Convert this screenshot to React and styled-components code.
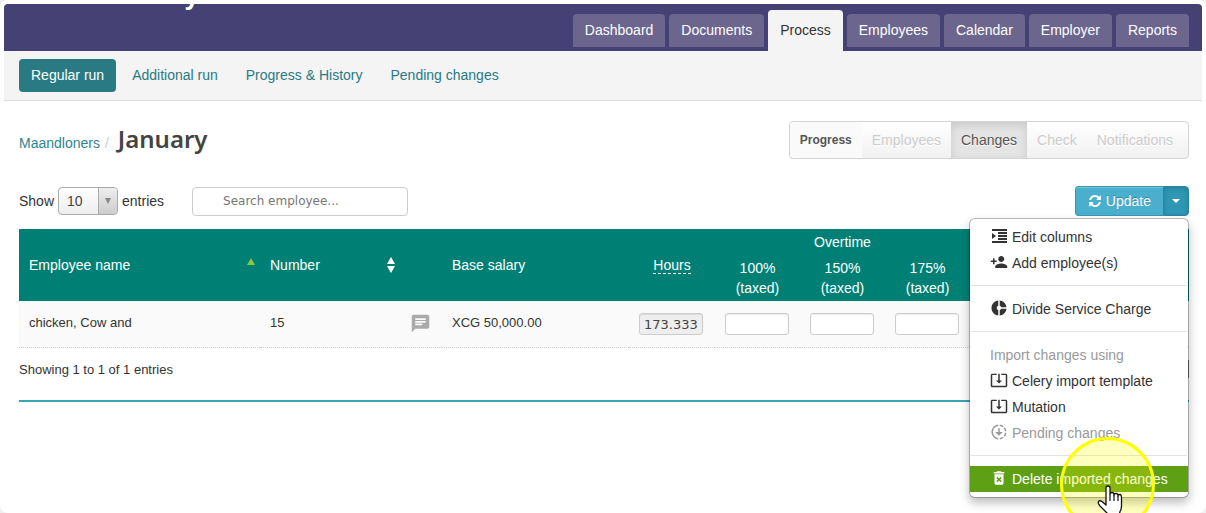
import React, { useState } from "react";
import styled, { createGlobalStyle } from "styled-components";
import {
  MdChat,
  MdDeleteForever,
  MdDonutSmall,
  MdDownloading,
  MdPersonAdd,
  MdSystemUpdateAlt,
} from "react-icons/md";

const GlobalStyle = createGlobalStyle`
  * {
    box-sizing: border-box;
  }
  body {
    margin: 0;
    background-color: #f0f0f0;
    color: #333;
    font-family: "Liberation Sans", Arial, sans-serif;
    font-size: 14px;
    line-height: 20px;
  }
  a {
    text-decoration: none;
  }
`;

const Page = styled.div`
  min-height: 100vh;
  padding: 4px 4px 0;
  overflow: hidden;
  position: relative;
  background-color: #fff;
  border-radius: 8px;
`;

const Header = styled.header`
  display: flex;
  justify-content: space-between;
  align-items: flex-end;
  height: 47px;
  padding: 0 13px 0 181px;
  overflow: hidden;
  background-color: #464174;
  border-radius: 4px 4px 0 0;
`;
const Brand = styled.div`
  align-self: flex-start;
  margin-top: -9px;
  color: #fff;
  font-family: "Noto Sans", sans-serif;
  font-size: 24px;
  font-weight: 700;
  line-height: 0;
`;
const Tabs = styled.nav`
  display: flex;
  align-items: flex-end;
  gap: 4px;
`;
const Tab = styled.a`
  height: ${(props) => (props.$active ? "41px" : "33px")};
  margin-bottom: ${(props) => (props.$active ? "0" : "4px")};
  padding: ${(props) => (props.$active ? "10px 12px" : "6px 12px")};
  border-radius: 4px 4px 0 0;
  background-color: ${(props) => (props.$active ? "#f4f4f4" : "#6c668f")};
  color: ${(props) => (props.$active ? "#333" : "#fff")};
`;

const SubNav = styled.nav`
  display: flex;
  gap: 4px;
  padding: 8px 15px;
  background-color: #f4f4f4;
  border-bottom: 1px solid #ddd;
`;
const SubLink = styled.a`
  padding: 6px 12px 7px;
  border-radius: 4px;
  background-color: ${(props) => (props.$active ? "#297a83" : "transparent")};
  color: ${(props) => (props.$active ? "#fff" : "#297a83")};
`;

const Content = styled.main`
  padding: 20px 13px 0 15px;
`;
const TitleRow = styled.div`
  display: flex;
  justify-content: space-between;
  align-items: flex-start;
`;
const Breadcrumb = styled.div`
  display: flex;
  align-items: baseline;
  gap: 5px;
  a {
    color: #2f8490;
  }
  span {
    color: #ccc;
  }
`;
const Title = styled.h1`
  margin: 0 0 0 4px;
  color: #444;
  font-family: "Trebuchet MS", "Noto Sans", sans-serif;
  font-size: 24px;
  font-weight: 600;
  line-height: 36px;
`;
const Steps = styled.div`
  display: flex;
  height: 38px;
  padding-right: 5px;
  border: 1px solid #d4d4d4;
  border-radius: 4px;
  background-image: linear-gradient(#fff, #f1f1f1);
`;
const StepsLabel = styled.strong`
  padding: 8px 10px;
  background-color: #fafafa;
  border-radius: 4px 0 0 4px;
  color: #555;
  font-size: 12px;
`;
const Step = styled.span`
  padding: 8px 10px;
  background-color: ${(props) => (props.$active ? "#e4e4e4" : "transparent")};
  box-shadow: ${(props) =>
    props.$active ? "inset 0 3px 8px rgba(0, 0, 0, 0.12)" : "none"};
  color: ${(props) => (props.$active ? "#555" : "#ccc")};
  text-shadow: 0 1px 0 #fff;
`;

const Toolbar = styled.div`
  display: flex;
  justify-content: space-between;
  align-items: center;
  margin: 27px 0 13px;
`;
const Filters = styled.div`
  display: flex;
  align-items: center;
  gap: 28px;
`;
const LengthLabel = styled.label`
  display: flex;
  align-items: center;
  gap: 4px;
`;
const SelectBox = styled.span`
  position: relative;
  display: flex;
`;
const Select = styled.select`
  appearance: none;
  width: 60px;
  height: 28px;
  padding: 0 24px 0 8px;
  border: 1px solid #aaa;
  border-radius: 4px;
  background: linear-gradient(#fff, #eee);
  color: #444;
  font: 14px "Liberation Sans", Arial, sans-serif;
`;
const SelectArrow = styled.span`
  position: absolute;
  top: 1px;
  right: 1px;
  bottom: 1px;
  width: 19px;
  display: flex;
  align-items: center;
  justify-content: center;
  border-left: 1px solid #aaa;
  border-radius: 0 3px 3px 0;
  background: linear-gradient(#eee, #ccc);
  pointer-events: none;
`;
const Search = styled.input`
  width: 216px;
  height: 29px;
  padding: 0 30px;
  border: 1px solid #ccc;
  border-radius: 4px;
  outline: none;
  font: 12px "DejaVu Sans", Verdana, sans-serif;
  &::placeholder {
    color: #777;
    opacity: 1;
  }
`;

const ButtonGroup = styled.div`
  position: relative;
  display: flex;
`;
const UpdateButton = styled.button`
  display: flex;
  align-items: center;
  gap: 4px;
  height: 30px;
  padding: 0 12px;
  border: 1px solid #3a96b0;
  border-right: none;
  border-radius: 4px 0 0 4px;
  background-color: #49afcd;
  box-shadow: inset 0 1px 0 rgba(255, 255, 255, 0.25);
  color: #fff;
  font: 14px "Liberation Sans", Arial, sans-serif;
  text-shadow: 0 -1px 0 rgba(0, 0, 0, 0.25);
`;
const ToggleButton = styled.button`
  display: flex;
  align-items: center;
  justify-content: center;
  width: 26px;
  height: 30px;
  padding: 0;
  border: 1px solid #2a85a0;
  border-radius: 0 4px 4px 0;
  background-color: #2f96b4;
  box-shadow: inset 0 2px 4px rgba(0, 0, 0, 0.15);
`;

const Menu = styled.ul`
  position: absolute;
  top: 100%;
  right: 0;
  z-index: 10;
  width: 220px;
  margin: 2px 0 0;
  padding: 5px 0;
  list-style: none;
  border: 1px solid rgba(0, 0, 0, 0.25);
  border-radius: 6px;
  background-color: #fff;
  background-clip: padding-box;
  box-shadow: 0 5px 10px rgba(0, 0, 0, 0.25);
`;
const MenuItem = styled.li`
  position: relative;
`;
const MenuLink = styled.a`
  display: flex;
  align-items: center;
  gap: 4px;
  height: 26px;
  padding: 0 20px;
  background-color: ${(props) => (props.$active ? "#5f9f15" : "transparent")};
  color: ${(props) =>
    props.$active ? "#fff" : props.$muted ? "#999" : "#333"};
  white-space: nowrap;
  svg {
    width: 18px;
    height: 18px;
    margin-bottom: 2px;
  }
`;
const MenuLabel = styled.li`
  height: 26px;
  padding: 3px 20px;
  color: #999;
`;
const Divider = styled.li`
  height: 1px;
  margin: 9px 1px 10px;
  background-color: #e2e2e2;
`;
const ClickSpot = styled.span`
  position: absolute;
  top: -29px;
  left: 90px;
  width: 95px;
  height: 95px;
  border: 3px solid #ff0;
  border-radius: 50%;
  background-color: rgba(255, 255, 0, 0.25);
  pointer-events: none;
`;
const Pointer = styled.svg`
  position: absolute;
  top: 19px;
  left: 127px;
  pointer-events: none;
`;

const Table = styled.table`
  width: 100%;
  table-layout: fixed;
  border-collapse: collapse;
`;
const Col = styled.col`
  width: ${(props) => props.$width};
`;
const HeadCell = styled.th`
  padding: 3px 10px;
  background-color: #008075;
  color: #fff;
  font-weight: 400;
  text-align: ${(props) => props.$align || "left"};
`;
const Sortable = styled.span`
  display: flex;
  justify-content: space-between;
  align-items: center;
  margin-right: -5px;
`;
const Hint = styled.span`
  border-bottom: 1px dashed #fff;
`;
const Cell = styled.td`
  height: 46px;
  padding: 12px 10px 10px;
  vertical-align: top;
  background-color: #fafafa;
  border-bottom: 1px dotted #ccc;
  font-size: 13px;
  line-height: 20px;
  svg,
  input {
    display: block;
  }
`;
const HoursInput = styled.input`
  width: 64px;
  height: 22px;
  padding: 0 4px;
  border: 1px solid #ccc;
  border-radius: 3px;
  background-color: ${(props) => (props.readOnly ? "#eee" : "#fff")};
  box-shadow: inset 0 1px 1px rgba(0, 0, 0, 0.08);
  color: #444;
  font: 13px "DejaVu Sans", Verdana, sans-serif;
`;

const Footer = styled.div`
  display: flex;
  justify-content: space-between;
  padding: 12px 0 20px;
  border-bottom: 2px solid #38a5b5;
  font-size: 13px;
`;
const PagerEdge = styled.span`
  width: 16px;
  height: 18px;
  background-color: #777;
`;

const tabs = [
  "Dashboard",
  "Documents",
  "Process",
  "Employees",
  "Calendar",
  "Employer",
  "Reports",
];
const subLinks = [
  "Regular run",
  "Additional run",
  "Progress & History",
  "Pending changes",
];
const steps = ["Employees", "Changes", "Check", "Notifications"];
const overtime = ["100%", "150%", "175%"];

const Triangle = ({ color = "#fff", width = 8, height = 7 }) => (
  <svg width={width} height={height} viewBox="0 0 8 7" preserveAspectRatio="none">
    <path d="M0 0h8L4 7z" fill={color} />
  </svg>
);

const SortArrows = () => (
  <svg width="8" height="16" viewBox="0 0 8 16">
    <path d="M4 0l4 7H0zM0 9h8l-4 7z" fill="#fff" />
  </svg>
);

const SortedUp = () => (
  <svg width="8" height="14" viewBox="0 0 8 14">
    <path d="M4 0l4 7H0z" fill="#8cc63f" />
  </svg>
);

const IndentIcon = () => (
  <svg width="18" height="18" viewBox="0 0 18 18" fill="currentColor">
    <path d="M2 2h15v2H2zM8 5h9v2H8zM8 8h9v2H8zM8 11h9v2H8zM2 14h15v2H2zM2 6l4 3-4 3z" />
  </svg>
);

const RefreshIcon = () => (
  <svg width="14" height="14" viewBox="0 0 1792 1792" fill="#fff">
    <path d="M1639 1056q0 5-1 7-64 268-268 434.5t-478 166.5q-146 0-282.5-55t-243.5-157l-129 129q-19 19-45 19t-45-19-19-45v-448q0-26 19-45t45-19h448q26 0 45 19t19 45-19 45l-137 137q71 66 161 102t187 36q134 0 250-65t186-179q11-17 53-117 8-23 30-23h192q13 0 22.5 9.5t9.5 22.5zm25-800v448q0 26-19 45t-45 19h-448q-26 0-45-19t-19-45 19-45l138-138q-148-137-349-137-134 0-250 65t-186 179q-11 17-53 117-8 23-30 23h-199q-13 0-22.5-9.5t-9.5-22.5v-7q65-268 270-434.5t480-166.5q146 0 284 55.5t245 156.5l130-129q19-19 45-19t45 19 19 45z" />
  </svg>
);

const HandPointer = () => (
  <Pointer width="26" height="32" viewBox="0 0 26 32">
    <path
      d="M9 20V3q0-2 2-2t2 2v6q0-1.500 2-1.500t2 2v.5q0-1.500 2-1.500t2 2v.5q0-1.500 1.800-1.500T24.500 13.500V21q0 3-1.500 5.500L22 31H11l-1-3-7-7q-2.500-3-1.500-4.500t3.500 0z"
      fill="#fff"
      stroke="#111"
      strokeWidth="1.3"
      strokeLinejoin="round"
    />
    <path d="M13 9v7M17 10v6M21 11v5" stroke="#111" strokeWidth="1.2" />
  </Pointer>
);

const App = () => {
  const [open, setOpen] = useState(true);
  const [query, setQuery] = useState("");

  return (
    <>
      <GlobalStyle />
      <Page>
        <Header>
          <Brand>y</Brand>
          <Tabs>
            {tabs.map((tab) => (
              <Tab key={tab} href="#" $active={tab === "Process"}>
                {tab}
              </Tab>
            ))}
          </Tabs>
        </Header>
        <SubNav>
          {subLinks.map((link, i) => (
            <SubLink key={link} href="#" $active={i === 0}>
              {link}
            </SubLink>
          ))}
        </SubNav>
        <Content>
          <TitleRow>
            <Breadcrumb>
              <a href="#">Maandloners</a>
              <span>/</span>
              <Title>January</Title>
            </Breadcrumb>
            <Steps>
              <StepsLabel>Progress</StepsLabel>
              {steps.map((step) => (
                <Step key={step} $active={step === "Changes"}>
                  {step}
                </Step>
              ))}
            </Steps>
          </TitleRow>

          <Toolbar>
            <Filters>
              <LengthLabel>
                Show
                <SelectBox>
                  <Select defaultValue="10">
                    <option>10</option>
                    <option>25</option>
                    <option>50</option>
                  </Select>
                  <SelectArrow>
                    <Triangle color="#888" width={6} height={6} />
                  </SelectArrow>
                </SelectBox>
                entries
              </LengthLabel>
              <Search
                aria-label="Search employee"
                placeholder="Search employee..."
                value={query}
                onChange={(e) => setQuery(e.target.value)}
              />
            </Filters>
            <ButtonGroup>
              <UpdateButton type="button">
                <RefreshIcon />
                Update
              </UpdateButton>
              <ToggleButton
                type="button"
                aria-label="More actions"
                onClick={() => setOpen(!open)}
              >
                <Triangle width={8} height={4} />
              </ToggleButton>
              {open && (
                <Menu>
                  <MenuItem>
                    <MenuLink href="#">
                      <IndentIcon />
                      Edit columns
                    </MenuLink>
                  </MenuItem>
                  <MenuItem>
                    <MenuLink href="#">
                      <MdPersonAdd />
                      Add employee(s)
                    </MenuLink>
                  </MenuItem>
                  <Divider />
                  <MenuItem>
                    <MenuLink href="#">
                      <MdDonutSmall />
                      Divide Service Charge
                    </MenuLink>
                  </MenuItem>
                  <Divider />
                  <MenuLabel>Import changes using</MenuLabel>
                  <MenuItem>
                    <MenuLink href="#">
                      <MdSystemUpdateAlt />
                      Celery import template
                    </MenuLink>
                  </MenuItem>
                  <MenuItem>
                    <MenuLink href="#">
                      <MdSystemUpdateAlt />
                      Mutation
                    </MenuLink>
                  </MenuItem>
                  <MenuItem>
                    <MenuLink href="#" $muted>
                      <MdDownloading />
                      Pending changes
                    </MenuLink>
                  </MenuItem>
                  <Divider />
                  <MenuItem>
                    <MenuLink href="#" $active>
                      <MdDeleteForever />
                      Delete imported changes
                    </MenuLink>
                    <ClickSpot />
                    <HandPointer />
                  </MenuItem>
                </Menu>
              )}
            </ButtonGroup>
          </Toolbar>

          <Table>
            <colgroup>
              <Col $width="241px" />
              <Col $width="140px" />
              <Col $width="42px" />
              <Col $width="187px" />
              <Col $width="86px" />
              <Col $width="85px" />
              <Col $width="85px" />
              <Col $width="85px" />
              <Col />
            </colgroup>
            <thead>
              <tr>
                <HeadCell rowSpan={2}>
                  <Sortable>
                    Employee name
                    <SortedUp />
                  </Sortable>
                </HeadCell>
                <HeadCell rowSpan={2}>
                  <Sortable>
                    Number
                    <SortArrows />
                  </Sortable>
                </HeadCell>
                <HeadCell rowSpan={2} />
                <HeadCell rowSpan={2}>Base salary</HeadCell>
                <HeadCell rowSpan={2} $align="center">
                  <Hint>Hours</Hint>
                </HeadCell>
                <HeadCell colSpan={3} $align="center">
                  Overtime
                </HeadCell>
                <HeadCell rowSpan={2} />
              </tr>
              <tr>
                {overtime.map((rate) => (
                  <HeadCell key={rate} $align="center">
                    {rate}
                    <br />
                    (taxed)
                  </HeadCell>
                ))}
              </tr>
            </thead>
            <tbody>
              <tr>
                <Cell>chicken, Cow and</Cell>
                <Cell>15</Cell>
                <Cell>
                  <MdChat size={21} color="#aaa" />
                </Cell>
                <Cell>XCG 50,000.00</Cell>
                <Cell>
                  <HoursInput aria-label="Hours" value="173.333" readOnly />
                </Cell>
                {overtime.map((rate) => (
                  <Cell key={rate}>
                    <HoursInput aria-label={"Overtime " + rate} />
                  </Cell>
                ))}
                <Cell />
              </tr>
            </tbody>
          </Table>
          <Footer>
            Showing 1 to 1 of 1 entries
            <PagerEdge />
          </Footer>
        </Content>
      </Page>
    </>
  );
};

export default App;
